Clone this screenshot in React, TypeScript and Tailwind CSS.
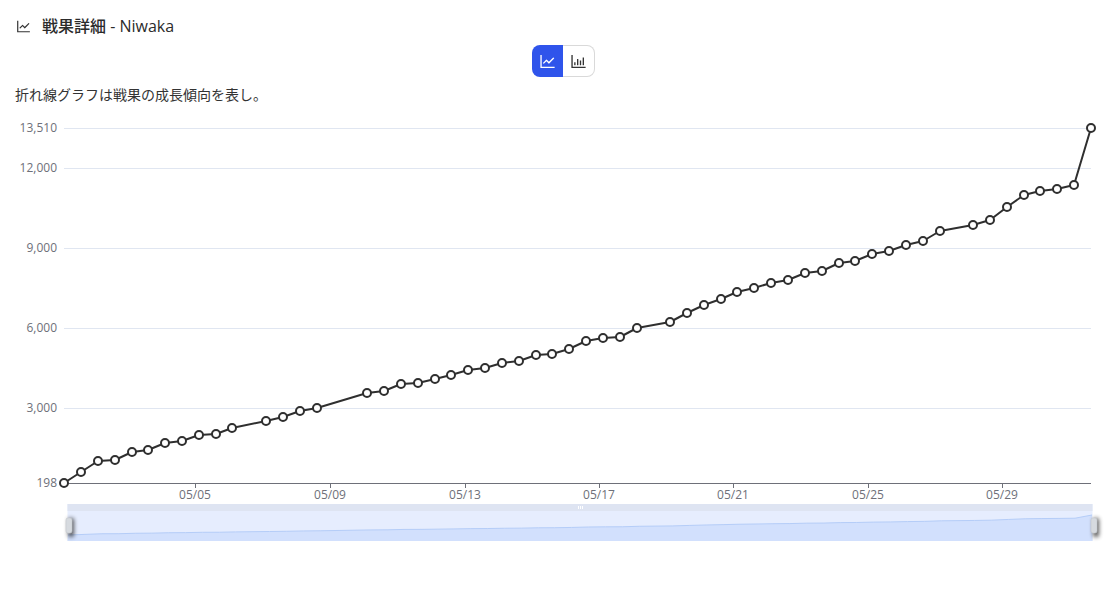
import React from 'react';
import { AiOutlineLineChart, AiOutlineBarChart } from 'react-icons/ai';

const points: [number, number][] = [
  [64, 483], [81, 472], [98, 461], [115, 460], [132, 452], [148, 450], [165, 443], [182, 441], [199, 435], [216, 434], [232, 428],
  [266, 421], [283, 417], [300, 411], [317, 408],
  [367, 393], [384, 391], [401, 384], [418, 383], [435, 379], [451, 375], [468, 370], [485, 368], [502, 363], [519, 361], [536, 355], [552, 354], [569, 349], [586, 341], [603, 338], [620, 337], [637, 328],
  [670, 322], [687, 313], [704, 305], [721, 299], [737, 292], [754, 288], [771, 283], [788, 280], [805, 273], [822, 271], [839, 263], [855, 261], [872, 254], [889, 251], [906, 245], [923, 241], [940, 231],
  [973, 225], [990, 220], [1007, 207], [1024, 195], [1040, 191], [1057, 189], [1074, 185], [1091, 128],
];

const yLabels = [
  { y: 128, label: '13,510' },
  { y: 168, label: '12,000' },
  { y: 248, label: '9,000' },
  { y: 328, label: '6,000' },
  { y: 408, label: '3,000' },
];
const ticks = [
  { x: 195, label: '05/05' },
  { x: 330, label: '05/09' },
  { x: 465, label: '05/13' },
  { x: 599, label: '05/17' },
  { x: 733, label: '05/21' },
  { x: 868, label: '05/25' },
  { x: 1002, label: '05/29' },
];

// the svg starts 106px down the page
const top = 106;
const line = points.map(([x, y]) => `${x},${y - top}`).join(' ');
const mini = points.map(([x, y]) => `${68 + ((x - 64) * 1024) / 1027},${535 - top - ((483 - y) * 20) / 355}`).join(' ');

function Handle({ x }: { x: number }) {
  return (
    <g>
      <rect x={x - 3} y={516 - top} width={6} height={19} rx={2} fill="#333" opacity={0.8} transform="translate(2 2)" style={{ filter: 'blur(2px)' }} />
      <rect x={x - 3} y={518 - top} width={6} height={15} rx={2} fill="#d6dadf" stroke="#c3c7cc" strokeWidth={0.6} />
    </g>
  );
}

export default function App() {
  return (
    <div className="w-[1109px] h-[611px] bg-white overflow-hidden text-[#333] font-['Open_Sans','Noto_Sans_CJK_JP',sans-serif]">
      <div className="flex items-center gap-[10px] pl-[15px] pt-4 h-[36px]">
        <AiOutlineLineChart className="w-[17px] h-[17px] text-[#333]" />
        <h1 className="text-[16px] leading-5 font-medium text-[#2b2b2b]">戦果詳細 - Niwaka</h1>
      </div>
      <div className="flex justify-center mt-[9px] pl-[18px]">
        <div className="flex h-8 w-[63px]">
          <button className="flex-1 flex items-center justify-center bg-[#2f54eb] rounded-l-lg text-white">
            <AiOutlineLineChart className="w-[19px] h-[19px]" />
          </button>
          <button className="flex-1 flex items-center justify-center bg-white border border-l-0 border-[#d9d9d9] rounded-r-lg text-[#333]">
            <AiOutlineBarChart className="w-[19px] h-[19px]" />
          </button>
        </div>
      </div>
      <p className="pl-[15px] mt-2 text-[14px] leading-5 text-[#333]">折れ線グラフは戦果の成長傾向を表し。</p>
      <svg width={1109} height={611 - top} className="block mt-[1px] font-['Open_Sans',sans-serif]">
        {yLabels.map((l) => (
          <g key={l.y}>
            <line x1={64} x2={1091} y1={l.y - top + 0.5} y2={l.y - top + 0.5} stroke="#e0e6f1" />
            <text x={57} y={l.y - top + 3.5} textAnchor="end" fontSize={12} fill="#6e7079">{l.label}</text>
          </g>
        ))}
        <text x={57} y={483 - top + 3.5} textAnchor="end" fontSize={12} fill="#6e7079">198</text>
        <line x1={64} x2={1091} y1={483 - top + 0.5} y2={483 - top + 0.5} stroke="#6e7079" />
        {ticks.map((t) => (
          <g key={t.x}>
            <line x1={t.x + 0.5} x2={t.x + 0.5} y1={483 - top} y2={488 - top} stroke="#6e7079" />
            <text x={t.x} y={499 - top} textAnchor="middle" fontSize={12} fill="#6e7079">{t.label}</text>
          </g>
        ))}
        <polyline points={line} fill="none" stroke="#2f2f2f" strokeWidth={2} strokeLinejoin="round" />
        {points.map(([x, y]) => (
          <circle key={x} cx={x} cy={y - top} r={4} fill="#fff" stroke="#2f2f2f" strokeWidth={2} />
        ))}

        {/* data zoom slider */}
        <rect x={67.5} y={504 - top} width={1025} height={37} fill="#e6edfe" />
        <rect x={67.5} y={504 - top} width={1025} height={7} fill="#dee4f2" />
        <polygon points={`67.5,${541 - top} ${mini} 1092.5,${541 - top}`} fill="#d2e0fd" />
        <polyline points={mini} fill="none" stroke="#b5cdf8" strokeWidth={1} />
        <rect x={578} y={506 - top} width={1} height={3} fill="#fff" />
        <rect x={580} y={506 - top} width={1} height={3} fill="#fff" />
        <rect x={582} y={506 - top} width={1} height={3} fill="#fff" />
        <Handle x={69} />
        <Handle x={1094} />
      </svg>
    </div>
  );
}
